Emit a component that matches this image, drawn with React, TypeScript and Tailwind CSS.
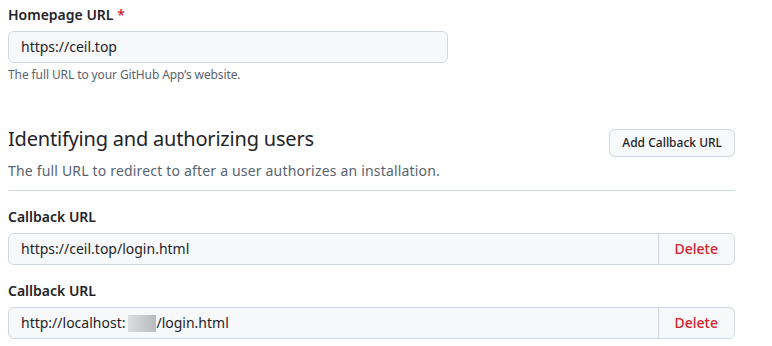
import React from "react";

function FieldLabel({ children }: { children: React.ReactNode }) {
  return (
    <label className="block text-sm font-semibold leading-[21px]">
      {children}
    </label>
  );
}

function CallbackField({ children }: { children: React.ReactNode }) {
  return (
    <div className="mt-[15px]">
      <FieldLabel>Callback URL</FieldLabel>
      <div className="mt-[6px] flex h-8 w-full rounded-md border border-[#d0d7de] bg-[#f6f8fa]">
        <div className="flex flex-1 items-center px-3 text-sm">{children}</div>
        <button className="rounded-r-md border-l border-[#d0d7de] bg-[#f6f8fa] px-4 text-sm font-medium text-[#d1242f]">
          Delete
        </button>
      </div>
    </div>
  );
}

export default function App() {
  return (
    <div className="h-[346px] w-[772px] overflow-hidden bg-white pl-2 pt-1 font-['Noto_Sans',sans-serif] text-[#1f2328]">
      <div className="w-[727px]">
        <FieldLabel>
          Homepage URL <span className="text-[#d1242f]">*</span>
        </FieldLabel>
        <div className="mt-[6px] flex h-8 w-[440px] items-center rounded-md border border-[#d0d7de] bg-[#f6f8fa] px-3 text-sm">
          https://ceil.top
        </div>
        <p className="mt-[3px] text-xs leading-[18px] tracking-[-0.1px] text-[#59636e]">
          The full URL to your GitHub App’s website.
        </p>

        <div className="mt-[40px] flex items-start justify-between border-b border-[#d0d7de] pb-[9px]">
          <div>
            <h2 className="text-xl leading-[30px] tracking-[-0.2px]">
              Identifying and authorizing users
            </h2>
            <p className="mt-[6px] text-sm leading-[21px] tracking-[0.18px] text-[#59636e]">
              The full URL to redirect to after a user authorizes an installation.
            </p>
          </div>
          <button className="mt-[5px] h-7 rounded-md border border-[#d0d7de] bg-[#f6f8fa] px-3 text-xs font-medium">
            Add Callback URL
          </button>
        </div>

        <CallbackField>https://ceil.top/login.html</CallbackField>
        <CallbackField>
          http://localhost:
          <span className="ml-[3px] inline-block h-[17px] w-[28px] bg-gradient-to-r from-[#dcdddf] to-[#b9babd]" />
          /login.html
        </CallbackField>
      </div>
    </div>
  );
}
